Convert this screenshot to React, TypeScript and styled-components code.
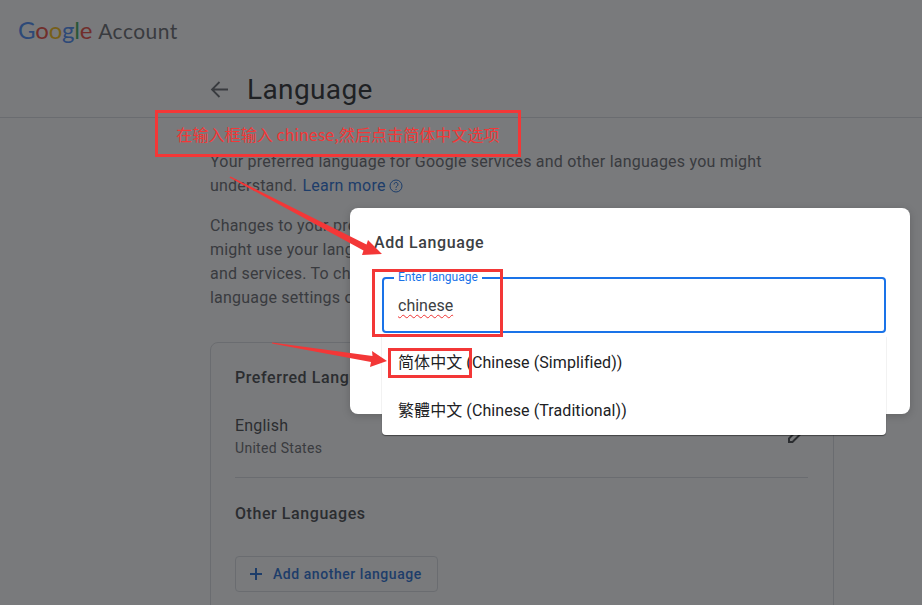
import React from "react";
import styled, { createGlobalStyle } from "styled-components";

const Global = createGlobalStyle`
  html, body { margin: 0; padding: 0; background: #fff; }
  body { font-family: Roboto, "Noto Sans CJK SC", sans-serif; }
`;

const Page = styled.div`
  position: relative;
  width: 922px;
  height: 605px;
  overflow: hidden;
  background: #fff;
`;

const TopBar = styled.header`
  display: flex;
  align-items: center;
  height: 60px;
  padding-left: 18px;
  box-sizing: border-box;
  padding-bottom: 1px;
`;

const Logo = styled.div`
  display: flex;
  align-items: baseline;
  gap: 6px;
`;

const GoogleWord = styled.span`
  font-family: Lato, sans-serif;
  font-size: 24px;
  letter-spacing: -0.2px;
`;

const Letter = styled.span<{ $c: string }>`
  color: ${(p) => p.$c};
`;

const AccountWord = styled.span`
  font-family: Lato, sans-serif;
  font-size: 21px;
  color: #5f6368;
  letter-spacing: 0.45px;
`;

const TitleBar = styled.div`
  display: flex;
  align-items: center;
  gap: 18px;
  height: 58px;
  padding-left: 210px;
  padding-top: 1px;
  border-bottom: 1px solid #dadce0;
  box-sizing: border-box;
`;

const Title = styled.h1`
  margin: 0;
  font-size: 28px;
  font-weight: 400;
  color: #202124;
  letter-spacing: 0.38px;
`;

const Content = styled.main`
  width: 624px;
  margin-left: 210px;
  padding-top: 32px;
`;

const Para = styled.p`
  margin: 0 0 16px;
  font-size: 16px;
  line-height: 24px;
  color: #5f6368;
  letter-spacing: 0.22px;
  white-space: nowrap;
`;

const LearnMore = styled.a`
  color: #1967d2;
  display: inline-flex;
  align-items: center;
  gap: 3px;
  margin-left: 1px;
`;

const Card = styled.section`
  margin-top: 32px;
  border: 1px solid #dadce0;
  border-radius: 8px;
  padding: 24px 25px 40px 24px;
`;

const CardHeading = styled.h2`
  margin: 0;
  font-size: 16px;
  line-height: 22px;
  font-weight: 500;
  color: #3c4043;
  letter-spacing: 0.57px;
`;

const LangRow = styled.div`
  margin-top: 25px;
  padding-bottom: 19px;
  border-bottom: 1px solid #dadce0;
  position: relative;
`;

const LangName = styled.div`
  font-size: 16px;
  line-height: 24px;
  color: #3c4043;
  letter-spacing: 0.2px;
`;

const LangRegion = styled.div`
  font-size: 14px;
  line-height: 20px;
  color: #5f6368;
  letter-spacing: 0.3px;
`;

const EditIcon = styled.svg`
  position: absolute;
  right: 1px;
  top: 10px;
`;

const OtherHeading = styled(CardHeading)`
  margin-top: 25px;
`;

const AddButton = styled.button`
  display: flex;
  align-items: center;
  gap: 10px;
  margin-top: 31px;
  height: 36px;
  width: 203px;
  padding: 0 0 0 13px;
  box-sizing: border-box;
  background: transparent;
  border: 1px solid #dadce0;
  border-radius: 4px;
  color: #1967d2;
  font-family: Roboto, sans-serif;
  font-size: 14px;
  font-weight: 500;
  letter-spacing: 0.55px;
`;

const Scrim = styled.div`
  position: absolute;
  inset: 0;
  background: rgba(32, 33, 36, 0.6);
`;

const Dialog = styled.div`
  position: absolute;
  left: 350px;
  top: 208px;
  width: 560px;
  height: 206px;
  box-sizing: border-box;
  padding: 25px 24px 0 24px;
  background: #fff;
  border-radius: 8px;
  box-shadow: 0 2px 8px rgba(0, 0, 0, 0.18);
`;

const DialogTitle = styled.h3`
  margin: 0;
  font-size: 16px;
  line-height: 20px;
  font-weight: 500;
  color: #3c4043;
  letter-spacing: 0.6px;
`;

const Field = styled.div`
  position: relative;
  margin: 24px 0 0 8px;
  width: 504px;
  height: 56px;
  box-sizing: border-box;
  padding: 16px 14px;
  border: 2px solid #1a73e8;
  border-radius: 4px;
  font-size: 16px;
  line-height: 22px;
  color: #3c4043;
`;

const FieldLabel = styled.label`
  position: absolute;
  left: 10px;
  top: -9px;
  padding: 0 4px;
  background: #fff;
  font-size: 12px;
  line-height: 14px;
  color: #1a73e8;
`;

const Misspelled = styled.span`
  text-decoration: underline wavy #e33;
  text-decoration-thickness: 1px;
  text-underline-offset: 3px;
`;

const Dropdown = styled.ul`
  position: absolute;
  left: 32px;
  top: 128px;
  width: 504px;
  height: 99px;
  margin: 0;
  padding: 3px 0 0;
  box-sizing: border-box;
  list-style: none;
  background: #fff;
  border-radius: 0 0 4px 4px;
  box-shadow: 0 1px 1px rgba(0, 0, 0, 0.45), 0 0 1px rgba(0, 0, 0, 0.08);
`;

const Option = styled.li`
  height: 48px;
  padding-left: 16px;
  font-family: Roboto, "Noto Sans CJK SC", sans-serif;
  font-size: 16px;
  line-height: 48px;
  color: #202124;
  letter-spacing: 0.08px;
`;

const Callout = styled.div`
  position: absolute;
  left: 155px;
  top: 110px;
  width: 366px;
  height: 47px;
  box-sizing: border-box;
  border: 3px solid #f33737;
  display: flex;
  align-items: center;
  justify-content: center;
  font-family: "Noto Sans CJK SC", sans-serif;
  font-size: 16px;
  letter-spacing: 0.08px;
  color: #f33737;
  white-space: nowrap;
`;

const RedBox = styled.div<{ $x: number; $y: number; $w: number; $h: number }>`
  position: absolute;
  left: ${(p) => p.$x}px;
  top: ${(p) => p.$y}px;
  width: ${(p) => p.$w}px;
  height: ${(p) => p.$h}px;
  box-sizing: border-box;
  border: 3px solid #f33737;
`;

const Arrows = styled.svg`
  position: absolute;
  left: 0;
  top: 0;
`;

export default function App() {
  return (
    <Page>
      <Global />
      <TopBar>
        <Logo>
          <GoogleWord>
            <Letter $c="#4285f4">G</Letter>
            <Letter $c="#ea4335">o</Letter>
            <Letter $c="#fbbc05">o</Letter>
            <Letter $c="#4285f4">g</Letter>
            <Letter $c="#34a853">l</Letter>
            <Letter $c="#ea4335">e</Letter>
          </GoogleWord>
          <AccountWord>Account</AccountWord>
        </Logo>
      </TopBar>
      <TitleBar>
        <svg width="19" height="19" viewBox="0 0 19 19" fill="none" stroke="#5f6368" strokeWidth="1.8">
          <path d="M18 9.5H2.5M9.500 2L2 9.5L9.5 17" />
        </svg>
        <Title>Language</Title>
      </TitleBar>
      <Content>
        <Para>
          Your preferred language for Google services and other languages you might
          <br />
          understand.{" "}
          <LearnMore>
            Learn more
            <svg width="14" height="14" viewBox="0 0 14 14" fill="none" stroke="#1967d2" strokeWidth="1">
              <circle cx="7" cy="7" r="6" />
              <path d="M5 5.5a2 2 0 1 1 3 1.7c-.7.4-1 .8-1 1.6M7 10v1" />
            </svg>
          </LearnMore>
        </Para>
        <Para>
          Changes to your preferred language
          <br />
          might use your language
          <br />
          and services. To change
          <br />
          language settings on
        </Para>
        <Card>
          <CardHeading>Preferred Language</CardHeading>
          <LangRow>
            <LangName>English</LangName>
            <LangRegion>United States</LangRegion>
            <EditIcon width="20" height="20" viewBox="0 0 20 20" fill="none" stroke="#3c4043" strokeWidth="2">
              <path d="M2 18v-3.500L14 2.500l3.500 3.500L5.500 18z" />
            </EditIcon>
          </LangRow>
          <OtherHeading>Other Languages</OtherHeading>
          <AddButton>
            <svg width="14" height="14" viewBox="0 0 14 14" stroke="#1967d2" strokeWidth="2">
              <path d="M7 1v12M1 7h12" />
            </svg>
            Add another language
          </AddButton>
        </Card>
      </Content>
      <Scrim />
      <Dialog>
        <DialogTitle>Add Language</DialogTitle>
        <Field>
          <FieldLabel>Enter language</FieldLabel>
          <Misspelled>chinese</Misspelled>
        </Field>
        <Dropdown>
          <Option>简体中文 (Chinese (Simplified))</Option>
          <Option>繁體中文 (Chinese (Traditional))</Option>
        </Dropdown>
      </Dialog>
      <Callout>在输入框输入 chinese,然后点击简体中文选项</Callout>
      <RedBox $x={372} $y={269} $w={131} $h={68} />
      <RedBox $x={388} $y={348} $w={84} $h={30} />
      <Arrows width="922" height="605" viewBox="0 0 922 605" fill="#f33737">
        <path d="M230.500 176.500L366.500 244.500L368 240L382 254L362 255L363.500 250.500L229.500 177.500z" />
        <path d="M272 342.500L372.500 356L372 351L387 361L370 367L371 362L272 343.500z" />
      </Arrows>
    </Page>
  );
}
